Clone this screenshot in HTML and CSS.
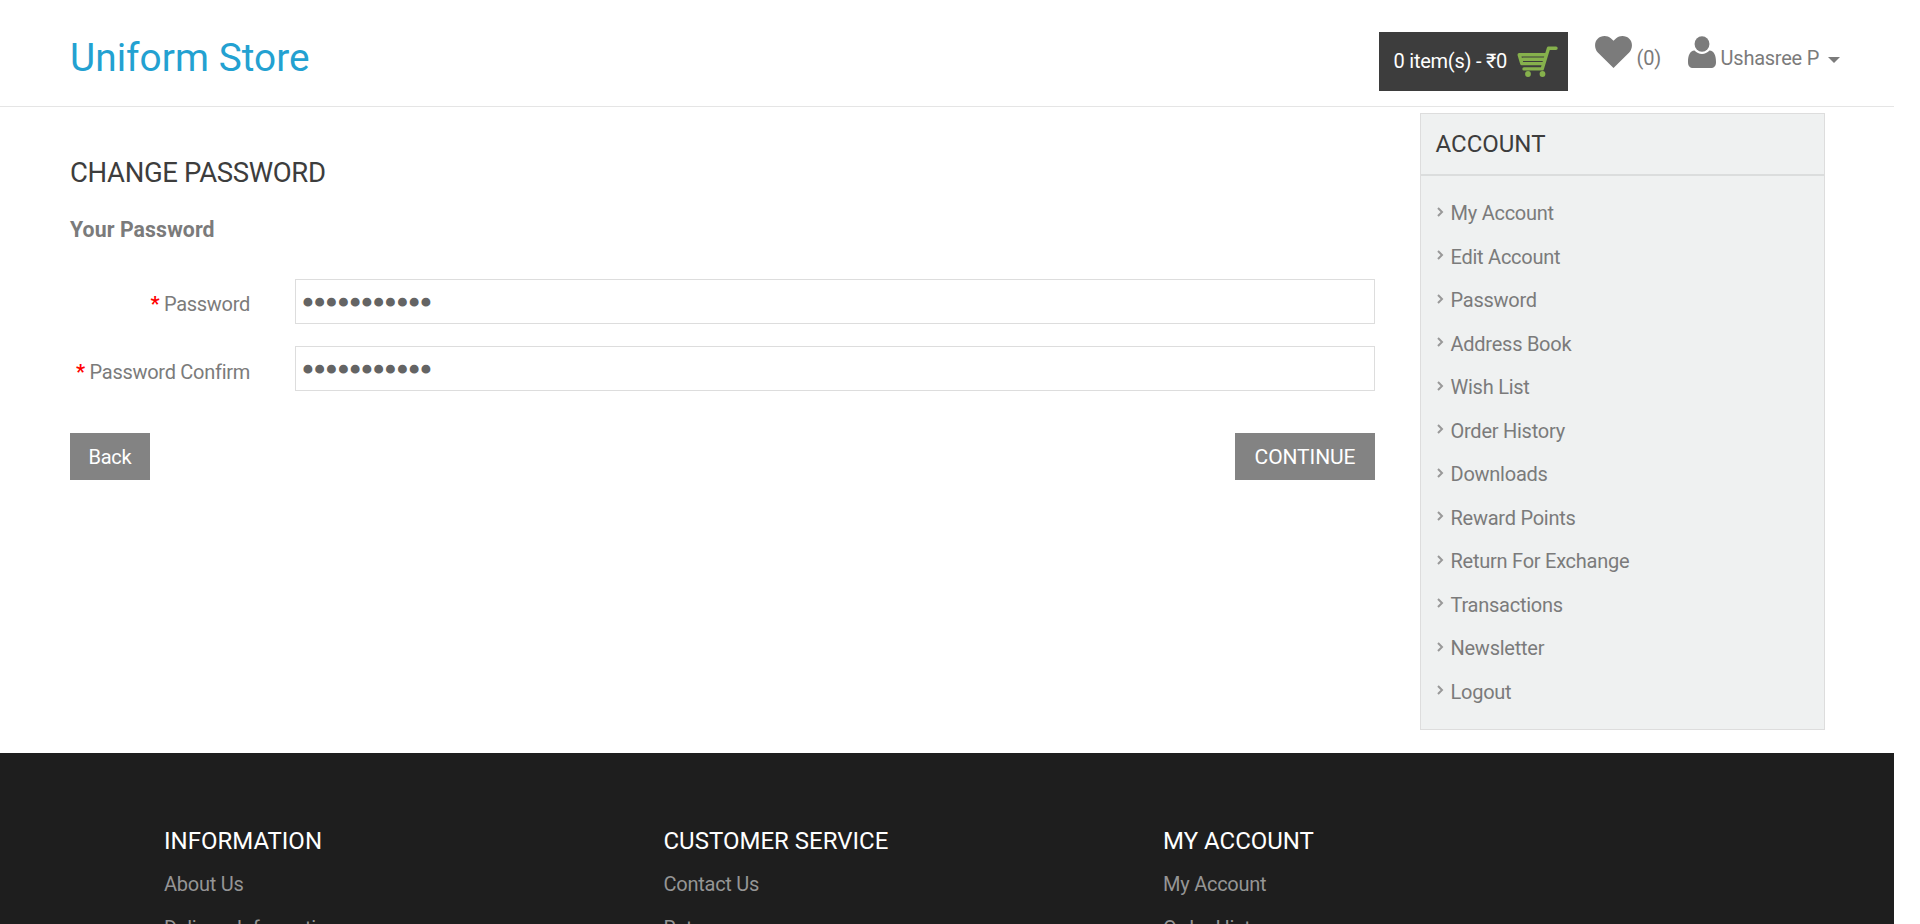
FILE: index.html
```html
<!DOCTYPE html>
<html lang="en">
<head>
<meta charset="utf-8">
<title>Change Password</title>
<link rel="stylesheet" href="styles.css">
</head>
<body>
<div class="page">
  <header class="header">
    <a class="logo">Uniform Store</a>
    <nav class="tools">
      <button class="cart"><span class="cart-total">0 item(s) - ₹0</span>
        <svg class="cart-icon" viewBox="0 0 41 31" width="41" height="31" fill="none" stroke="#86b14c" stroke-width="3.4" stroke-linejoin="round" stroke-linecap="round"><path d="M39 2.2H31.5L25.2 22.9H7M28 8.700H2.200L4.800 17.600H26.500M6 13.200H27"/><circle cx="11" cy="28" r="2.9" fill="#86b14c" stroke="none"/><circle cx="25.500" cy="28" r="2.9" fill="#86b14c" stroke="none"/></svg>
      </button>
      <a class="wish"><svg class="heart" viewBox="0 0 37 32" width="37" height="32" fill="#7b7b7b"><path d="M18.500 32 2.800 16.500C-.8 12.500-.8 6 2.500 2.900 6-.5 12-.9 15.800 2.200L18.500 4.800 21.200 2.200C25-.9 31-.5 34.500 2.900 37.800 6 37.800 12.500 34.200 16.500Z"/></svg><span>(0)</span></a>
      <a class="user"><svg class="person" viewBox="0 0 29 32" width="28" height="32" preserveAspectRatio="none" fill="#7b7b7b"><circle cx="14.500" cy="8" r="7.700"/><path d="M6.700 14.600C9 17 11.500 18 14.500 18S20 17 22.300 14.600C27 15 29 19.500 29 26 29 30 27 32 23.500 32H5.500C2 32 0 30 0 26 0 19.500 2 15 6.700 14.600Z"/></svg><span>Ushasree P</span><i class="caret"></i></a>
    </nav>
  </header>
  <main class="main">
    <section class="content">
      <h1 class="title">CHANGE PASSWORD</h1>
      <h2 class="legend">Your Password</h2>
      <form class="form">
        <div class="row"><label class="label" for="pw"><b class="req">*</b> Password</label><input class="field" id="pw" type="password" value="password123"></div>
        <div class="row"><label class="label" for="pw2"><b class="req">*</b> Password Confirm</label><input class="field" id="pw2" type="password" value="password123"></div>
        <div class="buttons"><a class="btn back">Back</a><a class="btn continue">CONTINUE</a></div>
      </form>
    </section>
    <aside class="sidebar">
      <h3 class="side-title">ACCOUNT</h3>
      <ul class="side-list">
        <li><svg class="chev" viewBox="0 0 7 10"><path d="M1 1 5 5 1 9"/></svg>My Account</li>
        <li><svg class="chev" viewBox="0 0 7 10"><path d="M1 1 5 5 1 9"/></svg>Edit Account</li>
        <li><svg class="chev" viewBox="0 0 7 10"><path d="M1 1 5 5 1 9"/></svg>Password</li>
        <li><svg class="chev" viewBox="0 0 7 10"><path d="M1 1 5 5 1 9"/></svg>Address Book</li>
        <li><svg class="chev" viewBox="0 0 7 10"><path d="M1 1 5 5 1 9"/></svg>Wish List</li>
        <li><svg class="chev" viewBox="0 0 7 10"><path d="M1 1 5 5 1 9"/></svg>Order History</li>
        <li><svg class="chev" viewBox="0 0 7 10"><path d="M1 1 5 5 1 9"/></svg>Downloads</li>
        <li><svg class="chev" viewBox="0 0 7 10"><path d="M1 1 5 5 1 9"/></svg>Reward Points</li>
        <li><svg class="chev" viewBox="0 0 7 10"><path d="M1 1 5 5 1 9"/></svg>Return For Exchange</li>
        <li><svg class="chev" viewBox="0 0 7 10"><path d="M1 1 5 5 1 9"/></svg>Transactions</li>
        <li><svg class="chev" viewBox="0 0 7 10"><path d="M1 1 5 5 1 9"/></svg>Newsletter</li>
        <li><svg class="chev" viewBox="0 0 7 10"><path d="M1 1 5 5 1 9"/></svg>Logout</li>
      </ul>
    </aside>
  </main>
  <footer class="footer">
    <div class="col"><h5>INFORMATION</h5><a>About Us</a><a>Delivery Information</a></div>
    <div class="col"><h5>CUSTOMER SERVICE</h5><a>Contact Us</a><a>Returns</a></div>
    <div class="col"><h5>MY ACCOUNT</h5><a>My Account</a><a>Order History</a></div>
  </footer>
</div>
</body>
</html>
```
FILE: styles.css
```css
* { box-sizing: border-box; }
html, body { margin: 0; height: 924px; overflow: hidden; background: #fff; }
body { font: 20px/30px Roboto, sans-serif; letter-spacing: -0.25px; color: #7b7b7b; }
.page { width: 1894px; height: 924px; overflow: hidden; }
h1, h2, h3, h5, ul { margin: 0; padding: 0; font-weight: 400; list-style: none; }

.header { display: flex; justify-content: space-between; align-items: flex-start; height: 107px; padding: 32px 54px 0 70px; border-bottom: 1px solid #e5e5e5; }
.logo { font-size: 38.75px; line-height: 52px; letter-spacing: 0.05px; color: #23a1d1; }
.tools { display: flex; align-items: flex-start; }
.cart { display: flex; align-items: center; justify-content: space-between; width: 189px; height: 59px; padding: 0 10px 0 15px; border: 0; background: #3d3d3d; color: #fff; font: 20px/30px Roboto, sans-serif; letter-spacing: -0.25px; white-space: nowrap; }
.cart-total { padding-bottom: 1px; }
.cart-icon { flex: none; margin-bottom: 1px; }
.wish, .user { display: flex; align-items: flex-start; padding-top: 4px; white-space: nowrap; }
.wish span, .user span { margin-top: 7px; line-height: 30px; }
.wish { width: 120px; padding-left: 27px; gap: 5px; }
.user { gap: 5px; }
.caret { margin: 21px 0 0 4px; border: 6px solid transparent; border-top-color: #7b7b7b; border-bottom: 0; }

.main { display: flex; gap: 45px; height: 646px; padding: 6px 0 0 70px; }
.content { width: 1305px; padding-top: 43px; }
.title { font-size: 27.5px; line-height: 34px; letter-spacing: -0.35px; color: #3d3d3d; }
.legend { margin-top: 25px; font-size: 21.25px; line-height: 30px; letter-spacing: 0.1px; font-weight: 700; }
.form { margin-top: 34px; }
.row { display: flex; gap: 45px; height: 67px; }
.label { width: 180px; padding-top: 10px; text-align: right; white-space: nowrap; letter-spacing: -0.28px; }
.row + .row .label { padding-top: 11px; }
.req { color: #f00; }
.field { width: 1080px; height: 45px; padding: 0 6px; border: 1px solid #ddd; background: #fff; color: #646464; font: 20px "DejaVu Sans", sans-serif; -webkit-text-stroke: 3px #646464; outline: 0; }
.buttons { display: flex; justify-content: space-between; margin-top: 20px; }
.btn { height: 47px; background: #838383; color: #fff; line-height: 48px; text-align: center; }
.back { width: 80px; }
.continue { width: 140px; font-size: 21px; letter-spacing: -0.1px; }

.sidebar { width: 405px; height: 617px; border: 1px solid #ddd; background: #eff1f1; }
.side-title { height: 62px; padding-left: 14.5px; border-bottom: 2px solid #dbdddd; font-size: 24px; line-height: 60px; letter-spacing: 0; color: #3d3d3d; }
.side-list { padding: 15.5px 0 0 16px; }
.side-list li { display: flex; align-items: center; height: 43.5px; }
.chev { width: 7px; height: 10px; margin: -3px 6.5px 0 0; fill: none; stroke: #999; stroke-width: 2; }

.footer { display: flex; height: 171px; padding: 73px 0 0 164px; background: #1e1e1e; color: #959595; }
.col { display: flex; flex-direction: column; flex: none; width: 499.5px; }
.col h5 { flex: none; height: 43px; font-size: 24px; line-height: 30px; letter-spacing: 0; color: #fff; }
.col a { flex: none; height: 44px; line-height: 30px; }
```
